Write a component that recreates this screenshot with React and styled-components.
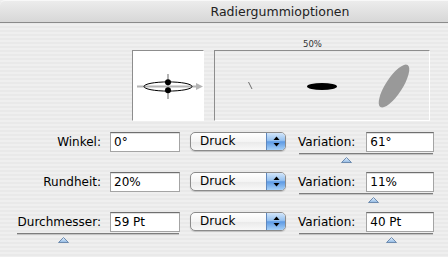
import React from "react";
import styled, { createGlobalStyle } from "styled-components";

const rows = [
  { label: "Winkel:", value: "0°", mode: "Druck", variation: "61°", thumb: 47 },
  { label: "Rundheit:", value: "20%", mode: "Druck", variation: "11%", thumb: 74 },
  { label: "Durchmesser:", value: "59 Pt", mode: "Druck", variation: "40 Pt", thumb: 92, slider: 46 },
];

const App = () => {
  return (
    <Window>
      <GlobalStyle />
      <TitleBar>Radiergummioptionen</TitleBar>
      <Body>
        <Preview>
          <TipBox>
            <svg width="70" height="69" viewBox="0 0 70 69">
              <line x1="4" y1="35.5" x2="66" y2="35.5" stroke="#b4b4b4" strokeWidth="2" />
              <polygon points="63,32 70,35.5 63,39" fill="#b4b4b4" />
              <line x1="35" y1="23" x2="35" y2="48" stroke="#b4b4b4" strokeWidth="2" />
              <ellipse cx="35" cy="35.5" rx="24" ry="4.6" fill="none" stroke="#000" strokeWidth="1" />
              <circle cx="35" cy="31.3" r="3" fill="#000" />
              <circle cx="35" cy="39.3" r="3" fill="#000" />
            </svg>
          </TipBox>
          <SampleColumn>
            <Caption>50%</Caption>
            <SampleBox>
              <svg width="214" height="69" viewBox="0 0 214 69">
                <line x1="33.5" y1="31" x2="37" y2="38" stroke="#6e6e6e" strokeWidth="1" />
                <ellipse cx="107" cy="35.5" rx="15" ry="3.4" fill="#000" />
                <ellipse cx="179" cy="35" rx="25" ry="8.3" fill="#999" transform="rotate(-57 179 35)" />
              </svg>
            </SampleBox>
          </SampleColumn>
        </Preview>

        <Rows>
          {rows.map((row) => (
            <Row key={row.label}>
              <Group>
                <FieldLine>
                  <Label width={85}>{row.label}</Label>
                  <Field width={70} offset={9} defaultValue={row.value} readOnly />
                </FieldLine>
                {row.slider !== undefined && (
                  <Track>
                    <Thumb style={{ left: row.slider - 5 }} />
                  </Track>
                )}
              </Group>
              <Popup>
                <PopupText>{row.mode}</PopupText>
                <PopupArrows>
                  <svg width="7" height="11" viewBox="0 0 7 11">
                    <polygon points="3.5,0.5 6.5,4 0.5,4" fill="#000" />
                    <polygon points="0.5,7 6.5,7 3.5,10.5" fill="#000" />
                  </svg>
                </PopupArrows>
              </Popup>
              <VariationGroup>
                <FieldLine>
                  <Label>Variation:</Label>
                  <Field width={68} offset={11} defaultValue={row.variation} readOnly />
                </FieldLine>
                <Track>
                  <Thumb style={{ left: row.thumb - 5 }} />
                </Track>
              </VariationGroup>
            </Row>
          ))}
        </Rows>
      </Body>
    </Window>
  );
};

const Thumb = (props) => (
  <ThumbWrap {...props}>
    <svg width="11" height="6" viewBox="0 0 11 6">
      <defs>
        <linearGradient id="thumbFill" x1="0" y1="0" x2="0" y2="1">
          <stop offset="0" stopColor="#e8f2fc" />
          <stop offset="1" stopColor="#8fb8e4" />
        </linearGradient>
      </defs>
      <polygon points="5.5,0.5 10.5,5.5 0.5,5.5" fill="url(#thumbFill)" stroke="#6e8cb0" strokeWidth="1" />
    </svg>
  </ThumbWrap>
);

export default App;

const GlobalStyle = createGlobalStyle`
  html, body {
    margin: 0;
    padding: 0;
    width: 448px;
    height: 257px;
    overflow: hidden;
  }
  body {
    font-family: "DejaVu Sans", "Liberation Sans", sans-serif;
    color: #000;
  }
`;

const Window = styled.div`
  width: 448px;
  height: 257px;
  display: flex;
  flex-direction: column;
  background: repeating-linear-gradient(
    to bottom,
    #efefef 0px,
    #efefef 2px,
    #e9e9e9 2px,
    #e9e9e9 4px
  );
`;

const TitleBar = styled.div`
  height: 23px;
  box-sizing: border-box;
  display: flex;
  align-items: center;
  justify-content: center;
  padding-left: 112px;
  border-top-left-radius: 5px;
  border-top: 1px solid #f8f8f8;
  border-bottom: 1px solid #8a8a8a;
  background: linear-gradient(to bottom, #ececec, #d7d7d7);
  font-size: 12.5px;
  color: #222;
`;

const Body = styled.div`
  padding: 16px 0 0 16px;
`;

const Preview = styled.div`
  display: flex;
  align-items: flex-end;
  margin-left: 116px;
`;

const TipBox = styled.div`
  width: 72px;
  height: 71px;
  box-sizing: border-box;
  background: #fff;
  border: 1px solid;
  border-color: #8d8d8d #fff #fff #8d8d8d;
  svg {
    display: block;
  }
`;

const SampleColumn = styled.div`
  display: flex;
  flex-direction: column;
  margin-left: 10px;
`;

const Caption = styled.div`
  font-size: 8.5px;
  line-height: 10px;
  margin: 0 0 1px 89px;
  color: #333;
`;

const SampleBox = styled.div`
  width: 216px;
  height: 71px;
  box-sizing: border-box;
  border: 1px solid;
  border-color: #8d8d8d #fff #fff #8d8d8d;
  svg {
    display: block;
  }
`;

const Rows = styled.div`
  margin-top: 11px;
  display: flex;
  flex-direction: column;
`;

const Row = styled.div`
  display: flex;
  align-items: flex-start;
  height: 40px;
`;

const Group = styled.div`
  display: flex;
  flex-direction: column;
`;

const VariationGroup = styled(Group)`
  margin-left: 12px;
`;

const FieldLine = styled.div`
  display: flex;
  align-items: center;
  height: 20px;
`;

const Label = styled.span`
  width: ${(p) => (p.width ? `${p.width}px` : "auto")};
  text-align: right;
  font-size: 12px;
  white-space: nowrap;
`;

const Field = styled.input`
  width: ${(p) => p.width}px;
  height: 20px;
  box-sizing: border-box;
  margin: 0 0 0 ${(p) => p.offset}px;
  padding: 0 0 0 3px;
  border: 1px solid #a4a4a4;
  border-top-color: #6f6f6f;
  background: #fff;
  box-shadow: inset 0 1px 0 #e0e0e0;
  font-family: "DejaVu Sans", "Liberation Sans", sans-serif;
  font-size: 12px;
  color: #000;
  outline: none;
`;

const Track = styled.div`
  position: relative;
  height: 2px;
  margin: 1px 1px 0 1px;
  background: linear-gradient(to bottom, #7d7d7d 50%, #c4c4c4 50%);
`;

const ThumbWrap = styled.div`
  position: absolute;
  top: 4px;
  width: 11px;
  height: 6px;
  svg {
    display: block;
  }
`;

const Popup = styled.div`
  display: flex;
  width: 96px;
  height: 19px;
  box-sizing: border-box;
  margin-left: 10px;
  border: 1px solid #8b8b8b;
  border-radius: 5px;
  overflow: hidden;
  background: linear-gradient(to bottom, #ffffff 0%, #f4f4f4 50%, #e9e9e9 51%, #f8f8f8 100%);
  box-shadow: 0 1px 1px rgba(0, 0, 0, 0.18);
`;

const PopupText = styled.span`
  flex: 1;
  padding-left: 9px;
  font-size: 12px;
  line-height: 17px;
`;

const PopupArrows = styled.div`
  width: 18px;
  display: flex;
  align-items: center;
  justify-content: center;
  border-left: 1px solid #5f87bd;
  background: linear-gradient(to bottom, #d3e6fa 0%, #93c0f0 45%, #5d9ae4 52%, #a6d0f7 100%);
  svg {
    display: block;
  }
`;
